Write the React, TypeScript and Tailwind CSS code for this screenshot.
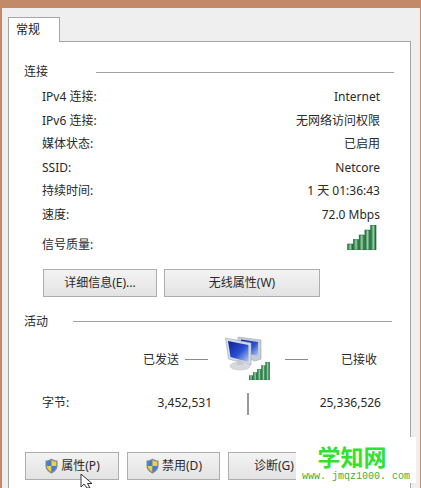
const font = { fontFamily: '"Noto Sans", "Noto Sans CJK SC", sans-serif' };

function Signal({ w, h, bars = 5 }: { w: number; h: number; bars?: number }) {
  const hs = [0.24, 0.42, 0.6, 0.8, 1];
  return (
    <svg width={w} height={h} viewBox="0 0 30 26" aria-hidden>
      <defs>
        <linearGradient id={`sg${w}`} x1="0" x2="1" y1="0" y2="0">
          <stop offset="0" stopColor="#17602f" />
          <stop offset="0.5" stopColor="#8fd6a0" />
          <stop offset="1" stopColor="#0f5528" />
        </linearGradient>
      </defs>
      {hs.slice(0, bars).map((f, i) => (
        <rect key={i} x={i * 6} y={26 - 26 * f} width="5.6" height={26 * f} fill={`url(#sg${w})`} stroke="#1c5c34" strokeWidth="0.5" />
      ))}
    </svg>
  );
}

function Shield() {
  return (
    <svg width="15" height="16" viewBox="0 0 14 16" aria-hidden>
      <path d="M7 .5 C5 2 3 2.5 1 2.5 V8 C1 11.5 4 14 7 15.5 C10 14 13 11.5 13 8 V2.5 C11 2.5 9 2 7 .5Z" fill="#7f8897" />
      <path d="M7 2 C5.5 3 4 3.5 2.3 3.6 V8 H7Z" fill="#3f7fd0" />
      <path d="M7 2 C8.5 3 10 3.5 11.7 3.6 V8 H7Z" fill="#f2cf3c" />
      <path d="M2.3 8 H7 V14 C4.5 12.8 2.5 10.8 2.3 8Z" fill="#f2cf3c" />
      <path d="M11.7 8 H7 V14 C9.5 12.8 11.5 10.8 11.7 8Z" fill="#3f7fd0" />
    </svg>
  );
}

function Monitor() {
  return (
    <svg width="45" height="38" viewBox="0 0 45 38" aria-hidden>
      <defs>
        <linearGradient id="scr" x1="0" x2="1" y1="0" y2="1">
          <stop offset="0" stopColor="#0a1f9c" />
          <stop offset="0.55" stopColor="#2a4fd0" />
          <stop offset="1" stopColor="#b8cdf2" />
        </linearGradient>
      </defs>
      <path d="M13 2 L36 5 V24 L30 26 L13 20Z" fill="#c4ccd6" stroke="#9aa6b4" strokeWidth="0.6" />
      <path d="M16 4.5 L33 7 V21 L16 17Z" fill="url(#scr)" />
      <path d="M0.5 3 L26 8 V30 L3.5 24Z" fill="#d5dbe3" stroke="#9aa6b4" strokeWidth="0.6" />
      <path d="M3 6 L23.5 10 V27 L5.5 22Z" fill="url(#scr)" />
      <ellipse cx="15" cy="31" rx="10" ry="4" fill="#d6dadd" stroke="#b4bac0" strokeWidth="0.5" />
      <rect x="12" y="25" width="6" height="5" fill="#c4cacf" />
    </svg>
  );
}

function Row({ label, value }: { label: string; value: React.ReactNode }) {
  return (
    <div className="flex justify-between items-center h-[18px] text-[12px] leading-[18px] text-[#2a2a2a]">
      <span>{label}</span>
      <span>{value}</span>
    </div>
  );
}

function Section({ title, lineGap, lineEnd }: { title: string; lineGap: string; lineEnd: string }) {
  return (
    <div className={`flex items-center h-[18px] text-[12px] text-[#2a2a2a] ${lineEnd}`}>
      <span>{title}</span>
      <div className={`flex-1 h-px bg-[#a0a0a0] ${lineGap}`} />
    </div>
  );
}

const btn = "h-[28px] flex items-center justify-center gap-[2px] text-[12px] text-[#2a2a2a] border border-[#adadad] bg-gradient-to-b from-[#f3f3f3] to-[#e3e3e3]";

export default function App() {
  return (
    <div style={font} className="relative w-[421px] h-[488px] overflow-hidden bg-[#c28a68]">
      <div className="mt-[8px] ml-[2px] mr-[1px] h-[480px] bg-[#f3eee8] pl-[1px]">
        <div className="h-full bg-[#efefef] pl-[5px] pr-[9px] pt-[9px]">
          <div className="w-[52px] h-[25px] relative z-10 bg-white border border-b-0 border-[#a5a5a5] flex items-center pl-[7px] text-[12px] text-[#222]">常规</div>
          <div className="-mt-px h-[460px] bg-white border border-[#a5a5a5] pl-[15px] pr-[16px] pt-[21px]">
            <Section title="连接" lineGap="ml-[48px]" lineEnd="" />
            <div className="pl-[18px] pr-[14px] mt-[7px] text-[12px]">
              <div className="flex flex-col gap-[5.5px]">
                <Row label="IPv4 连接:" value="Internet" />
                <Row label="IPv6 连接:" value="无网络访问权限" />
                <Row label="媒体状态:" value="已启用" />
                <Row label="SSID:" value="Netcore" />
                <Row label="持续时间:" value="1 天 01:36:43" />
                <Row label="速度:" value="72.0 Mbps" />
              </div>
              <div className="flex justify-between items-center h-[28px] text-[12px] text-[#2a2a2a]">
                <span className="mt-[14px]">信号质量:</span>
                <span className="mr-[3px] flex"><Signal w={30} h={25} /></span>
              </div>
            </div>
            <div className="flex gap-[7px] ml-[19px] mt-[17px]">
              <div className={`${btn} w-[114px] border-[#4f8fb8]`}>详细信息(E)...</div>
              <div className={`${btn} w-[156px]`}>无线属性(W)</div>
            </div>
            <div className="mt-[16px]">
              <Section title="活动" lineGap="ml-[25px]" lineEnd="mr-[2px]" />
            </div>
            <div className="flex items-center mt-[4px] h-[45px] text-[12px] text-[#2a2a2a]">
              <span className="ml-[119px] mt-[5px]">已发送</span>
              <div className="w-[23px] h-px bg-[#8a8a8a] ml-[6px] mt-[5px]" />
              <div className="relative ml-[17px] w-[45px] h-[45px]">
                <Monitor />
                <div className="absolute right-0 bottom-0 flex"><Signal w={21} h={18} /></div>
              </div>
              <div className="w-[23px] h-px bg-[#8a8a8a] ml-[15px] mt-[5px]" />
              <span className="ml-[33px] mt-[5px]">已接收</span>
            </div>
            <div className="flex items-center mt-[12px] h-[22px] text-[12px] text-[#2a2a2a]">
              <span className="ml-[18px] w-[100px]">字节:</span>
              <span className="w-[70px] text-right">3,452,531</span>
              <div className="w-[2px] h-[22px] bg-[#999] ml-[35px] mt-[2px]" />
              <span className="w-[132px] text-right">25,336,526</span>
            </div>
            <div className="flex gap-[8px] ml-[1px] mt-[38px]">
              <div className={`${btn} w-[94px] border-[#8db4d4] from-[#e4f1fb] to-[#cbe3f6]`}><Shield />属性(P)</div>
              <div className={`${btn} w-[93px]`}><Shield />禁用(D)</div>
              <div className={`${btn} w-[100px] justify-start pl-[25px]`}>诊断(G)</div>
            </div>
          </div>
        </div>
      </div>
      <div className="absolute left-[296px] top-[437px] w-[120px] h-[46px] bg-white flex flex-col items-center">
        <span className="text-[23px] leading-[30px] font-bold text-[#33e02e] mt-[4px] ml-[-8px]" style={{ fontFamily: '"Noto Sans CJK SC", sans-serif' }}>学知网</span>
        <span className="text-[10px] leading-[12px] text-[#3fae3a] whitespace-nowrap" style={{ fontFamily: '"Liberation Mono", monospace' }}>www. jmqz1000. com</span>
      </div>
      <svg className="absolute left-[80px] top-[474px]" width="14" height="14" viewBox="0 0 14 14" aria-hidden>
        <path d="M1 0 V13 L4 10 L7 14 H10 L7.5 9.5 H12Z" fill="#fff" stroke="#333" strokeWidth="1" />
      </svg>
    </div>
  );
}
